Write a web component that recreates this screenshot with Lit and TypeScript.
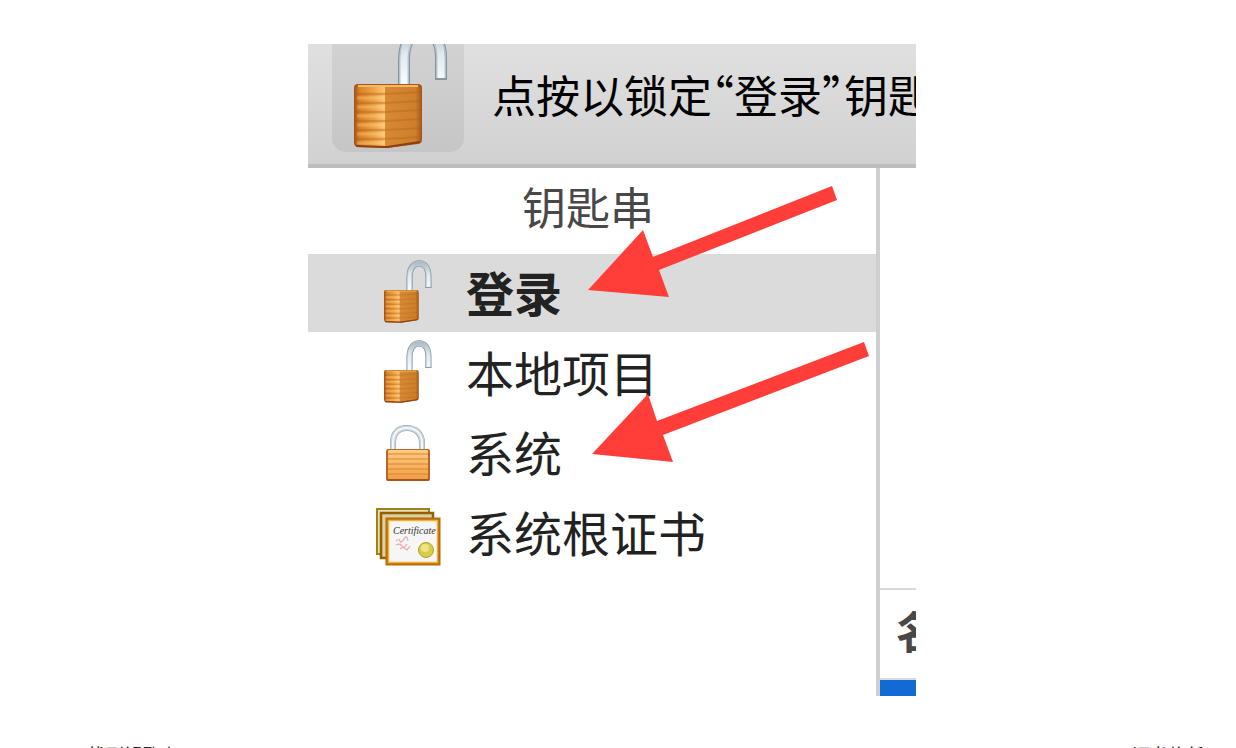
import { LitElement, html, svg, css, nothing } from "lit";
import { customElement, state } from "lit/decorators.js";

type IconName = "open" | "closed" | "certificate";

interface Keychain {
  label: string;
  icon: IconName;
}

const KEYCHAINS: Keychain[] = [
  { label: "登录", icon: "open" },
  { label: "本地项目", icon: "open" },
  { label: "系统", icon: "closed" },
  { label: "系统根证书", icon: "certificate" },
];

@customElement("keychain-icon")
export class KeychainIcon extends LitElement {
  static properties = { name: { type: String } };
  declare name: IconName;

  static styles = css`
    :host { display: block; }
    svg { display: block; width: 100%; height: 100%; overflow: visible; }
  `;

  private gradients() {
    return svg`<defs>
      <linearGradient id="left">
        <stop offset="0" stop-color="#ad5718"/><stop offset=".15" stop-color="#d88228"/>
        <stop offset=".65" stop-color="#f0a548"/><stop offset="1" stop-color="#ffc775"/>
      </linearGradient>
      <linearGradient id="right">
        <stop offset="0" stop-color="#d78a33"/><stop offset=".85" stop-color="#cf7e2a"/>
        <stop offset="1" stop-color="#a85d1c"/>
      </linearGradient>
      <linearGradient id="front" x2="0" y2="1">
        <stop offset="0" stop-color="#ffcc83"/><stop offset="1" stop-color="#f2a044"/>
      </linearGradient>
      <linearGradient id="shine" gradientUnits="userSpaceOnUse" x1="0" y1="0" x2="0" y2="50">
        <stop offset="0" stop-color="#a9b6bf"/><stop offset=".5" stop-color="#dfe8ee"/>
        <stop offset="1" stop-color="#f4f9fc"/>
      </linearGradient>
    </defs>`;
  }

  private open() {
    const shackle = "M50 57V32C50 13 58 4 69 4C80 4 87 13 87 30V51";
    const bands = [66, 75, 84, 93, 102, 111];
    return html`<svg viewBox="0 0 94 120" aria-hidden="true">
      ${this.gradients()}
      <path d=${shackle} fill="none" stroke="#84929b" stroke-width="12"/>
      <path d=${shackle} fill="none" stroke="#b7c4cc" stroke-width="10"/>
      <path d=${shackle} fill="none" stroke="url(#shine)" stroke-width="7"/>
      <path d="M81 51H93" stroke="#8996a0" stroke-width="2"/>
      <path d="M0 60Q0 56 4 56H64Q68 56 68 60V112Q68 115 64 116L33 120L4 119Q0 118 0 115Z" fill="#a4571a"/>
      <path d="M1 61Q1 58 5 58H31V119L5 118Q1 117 1 114Z" fill="url(#left)"/>
      <path d="M31 58H63Q67 58 67 61V111Q67 114 63 115L31 119Z" fill="url(#right)"/>
      ${bands.map((y) => svg`
        <path d=${`M1 ${y}H31`} stroke="#a95c14" stroke-opacity=".4" stroke-width="2.5"/>
        <path d=${`M31 ${y}L67 ${y - 2}`} stroke="#a95c14" stroke-opacity=".3" stroke-width="2"/>
        <path d=${`M3 ${y + 4}H31`} stroke="#ffdb95" stroke-opacity=".3" stroke-width="3"/>`)}
      <path d="M4 58H64" stroke="#f6b867" stroke-width="2"/>
      <path d="M2 118L33 119L66 114" fill="none" stroke="#8d3f0d" stroke-width="2"/>
    </svg>`;
  }

  private closed() {
    const shackle = "M8 27V18C8 7 14 3 22 3S37 8 37 18V27";
    return html`<svg viewBox="0 0 46 56" aria-hidden="true">
      ${this.gradients()}
      <path d=${shackle} fill="none" stroke="#94a1aa" stroke-width="6"/>
      <path d=${shackle} fill="none" stroke="#cbd4da" stroke-width="5"/>
      <path d=${shackle} fill="none" stroke="#f3f7f9" stroke-width="2"/>
      <rect x="1" y="24" width="44" height="32" rx="2" fill="#b86731"/>
      <rect x="3" y="25" width="40" height="29" rx="1" fill="url(#front)"/>
      ${[29, 34, 39, 44, 49].map((y) => svg`<path d=${`M3 ${y}H43`} stroke="#d88432" stroke-opacity=".65" stroke-width="1.3"/>`)}
      <path d="M2 55H44" stroke="#a24d20" stroke-width="1.5"/>
    </svg>`;
  }

  private certificate() {
    return html`<svg viewBox="0 0 64 57" aria-hidden="true">
      <rect x="1" y="1" width="52" height="45" fill="#e5e0b5" stroke="#9d821b" stroke-width="2"/>
      <rect x="5" y="5" width="52" height="45" fill="#d9d1a2" stroke="#966000" stroke-width="2.5"/>
      <rect x="11" y="11" width="52" height="45" fill="#f6f6f6" stroke="#bd6b07" stroke-width="3"/>
      <rect x="12.5" y="12.5" width="49" height="42" fill="none" stroke="#efb334" stroke-width="1.5"/>
      <text x="17" y="26" font-family="Liberation Serif, serif" font-style="italic" font-size="10" fill="#333">Certificate</text>
      <path d="M20 33q3-3 4 0t4-2t4 2M20 37q4-2 6 1t5-2M24 41l3-2l4 3l3-4" fill="none" stroke="#eca5aa" stroke-width="1.2"/>
      <circle cx="50" cy="42" r="7.5" fill="#d8cc4a" stroke="#aaa02d"/>
      <circle cx="49" cy="40" r="4" fill="#ece583"/>
    </svg>`;
  }

  render() {
    if (this.name === "closed") return this.closed();
    if (this.name === "certificate") return this.certificate();
    return this.open();
  }
}

@customElement("app-root")
export class AppRoot extends LitElement {
  @state() private selected = 0;

  static styles = css`
    :host {
      display: block;
      height: 100vh;
      overflow: hidden;
      background: #fff;
      color: #222;
      font-family: "Noto Sans CJK SC", sans-serif;
    }
    * { box-sizing: border-box; }
    main { padding: 44px 12px 0 0; }
    .figure {
      position: relative;
      width: min(100%, 608px);
      margin: 0 auto;
      overflow: hidden;
    }
    .toolbar {
      display: flex;
      gap: 28px;
      height: 124px;
      padding-left: 24px;
      border-bottom: 4px solid #bdbdbd;
      background: linear-gradient(#e0e0e0, #d1d1d1);
    }
    .lock {
      flex: none;
      display: flex;
      align-items: flex-end;
      width: 132px;
      height: 108px;
      padding: 0 16px 4px 22px;
      border: 0;
      border-radius: 0 0 14px 14px;
      background: #0000000f;
    }
    .lock keychain-icon { flex: none; width: 94px; height: 120px; }
    .hint {
      margin: 0;
      padding-top: 18px;
      color: #000;
      font-size: 44px;
      font-feature-settings: "halt";
      line-height: 64px;
      white-space: nowrap;
    }
    .body { display: grid; grid-template-columns: minmax(0, 1fr) 40px; }
    .heading {
      margin: 0;
      padding: 6px 8px 16px 0;
      color: #484848;
      font-size: 44px;
      font-weight: 400;
      line-height: 64px;
      text-align: center;
    }
    .sidebar { padding-bottom: 124px; }
    .list { margin: 0; padding: 0; list-style: none; display: grid; gap: 2px; }
    .row {
      display: grid;
      grid-template-columns: 64px 1fr;
      gap: 26px;
      align-items: center;
      width: 100%;
      height: 78px;
      padding: 0 0 0 68px;
      border: 0;
      background: none;
      color: #222;
      font: 400 48px/72px "Noto Sans CJK SC", sans-serif;
      text-align: left;
      white-space: nowrap;
    }
    .row span { padding-bottom: 4px; }
    .row.selected { background: #dbdbdb; font-weight: 700; }
    .icon { justify-self: center; }
    .icon.open { width: 48px; height: 62px; margin-bottom: 2px; }
    .icon.closed { width: 46px; height: 56px; }
    .icon.certificate { width: 64px; height: 57px; margin-top: 6px; }
    .details {
      display: flex;
      flex-direction: column;
      justify-content: flex-end;
      border-left: 4px solid #cfcfcf;
      overflow: hidden;
    }
    .column {
      height: 92px;
      padding-left: 16px;
      border-top: 2px solid #d9d9d9;
      border-bottom: 2px solid #d9d9d9;
      color: #484848;
      font-size: 44px;
      font-weight: 700;
      line-height: 80px;
      white-space: nowrap;
    }
    .item { height: 16px; background: #126ad5; }
    .arrows { position: absolute; inset: 0; width: 608px; height: 652px; fill: #ff3e3a; pointer-events: none; }
    .caption {
      display: flex;
      justify-content: space-between;
      padding: 44px 20px 0 88px;
      font-size: 18px;
      line-height: 28px;
    }
  `;

  render() {
    return html`<main>
      <section class="figure">
        <header class="toolbar">
          <button class="lock" aria-label="锁定"><keychain-icon name="open"></keychain-icon></button>
          <p class="hint">点按以锁定“登录”钥匙串</p>
        </header>
        <div class="body">
          <nav class="sidebar">
            <h2 class="heading">钥匙串</h2>
            <ul class="list">
              ${KEYCHAINS.map((k, i) => html`<li>
                <button
                  class="row ${i === this.selected ? "selected" : ""}"
                  aria-current=${i === this.selected ? "true" : nothing}
                  @click=${() => (this.selected = i)}
                ><keychain-icon class="icon ${k.icon}" name=${k.icon}></keychain-icon><span>${k.label}</span></button>
              </li>`)}
            </ul>
          </nav>
          <div class="details">
            <div class="column">名称</div>
            <div class="item"></div>
          </div>
        </div>
        <svg class="arrows" viewBox="0 0 608 652" aria-hidden="true">
          <path d="M280 246L335 186L345 213L524 142L529 156L351 226L361 253Z"/>
          <path d="M284 410L340 350L349 377L556 298L561 312L355 391L365 418Z"/>
        </svg>
      </section>
      <div class="caption"><span>找到钥匙串</span><span>证书信任</span></div>
    </main>`;
  }
}
